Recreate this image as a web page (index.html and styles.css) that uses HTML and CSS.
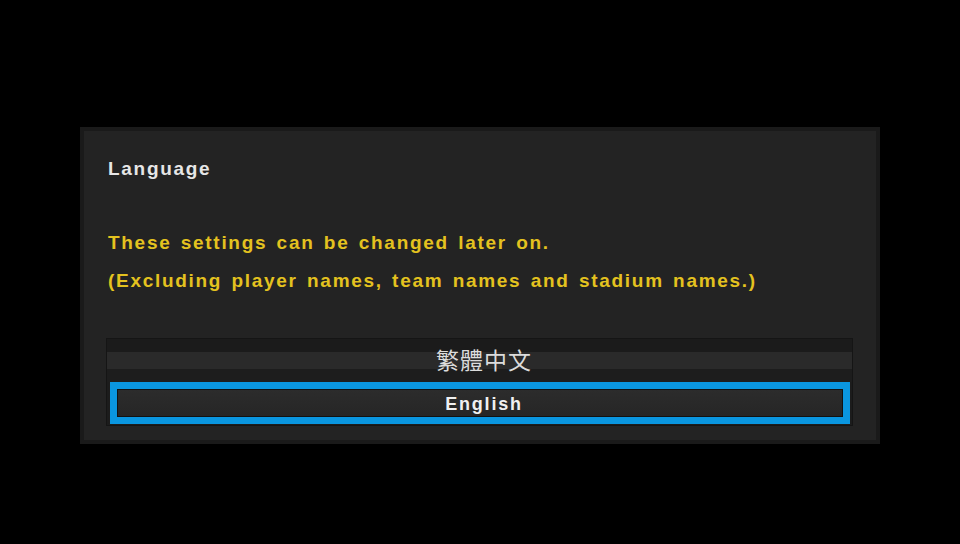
FILE: index.html
```html
<!DOCTYPE html>
<html lang="en">
<head>
<meta charset="utf-8">
<title>Language</title>
<link rel="stylesheet" href="styles.css">
</head>
<body>
<div class="screen">
  <section class="panel">
    <h1 class="title">Language</h1>
    <div class="notice">
      <p>These settings can be changed later on.</p>
      <p>(Excluding player names, team names and stadium names.)</p>
    </div>
    <ul class="options">
      <li class="option zh">繁體中文</li>
      <li class="option selected"><span class="inner">English</span></li>
    </ul>
  </section>
</div>
</body>
</html>
```
FILE: styles.css
```css
html, body {
  margin: 0;
  padding: 0;
  background: #000;
}
.screen {
  width: 960px;
  height: 544px;
  padding-top: 127px;
  box-sizing: border-box;
  font-family: "Liberation Sans", Arial, sans-serif;
}
.panel {
  margin-left: 80px;
  width: 800px;
  height: 317px;
  box-sizing: border-box;
  border: 4px solid #1a1a1a;
  background: #232323;
  padding: 27px 0 0 24px;
}
.title {
  margin: 0;
  font-size: 19px;
  line-height: 22px;
  font-weight: bold;
  letter-spacing: 1.7px;
  color: #e6e6e6;
}
.notice {
  margin-top: 44px;
  color: #e4c21f;
  font-size: 19px;
  font-weight: bold;
  letter-spacing: 1.7px;
  word-spacing: 2.4px;
}
.notice p {
  margin: 0;
  line-height: 38px;
}
.options {
  list-style: none;
  margin: 38px 0 0 -2px;
  padding: 0;
  width: 747px;
  height: 88px;
  box-sizing: border-box;
  border: 1px solid #151515;
  background: #1c1c1c;
}
.option {
  display: flex;
  align-items: center;
  justify-content: center;
}
.zh {
  height: 43px;
  background: linear-gradient(#1b1b1b 0, #1b1b1b 13px, #2a2a2a 13px, #2a2a2a 30px, #1d1d1d 30px, #1d1d1d 43px);
  font-family: "Noto Sans CJK TC", "Noto Sans CJK SC", sans-serif;
  font-size: 23px;
  letter-spacing: 1px;
  color: #dcdcdc;
  padding: 0 0 3px 9px;
  box-sizing: border-box;
}
.selected {
  margin: 0 2px 0 3px;
  height: 42px;
  box-sizing: border-box;
  border: 7px solid #0a96e0;
  padding: 0;
  align-items: stretch;
}
.selected .inner {
  flex: 1;
  display: flex;
  align-items: center;
  justify-content: center;
  border: 1px solid #121212;
  background: linear-gradient(#2c2c2c, #262626);
  font-size: 18px;
  font-weight: bold;
  letter-spacing: 1.8px;
  color: #f0f0f0;
  padding: 2px 0 0 8px;
}
```
